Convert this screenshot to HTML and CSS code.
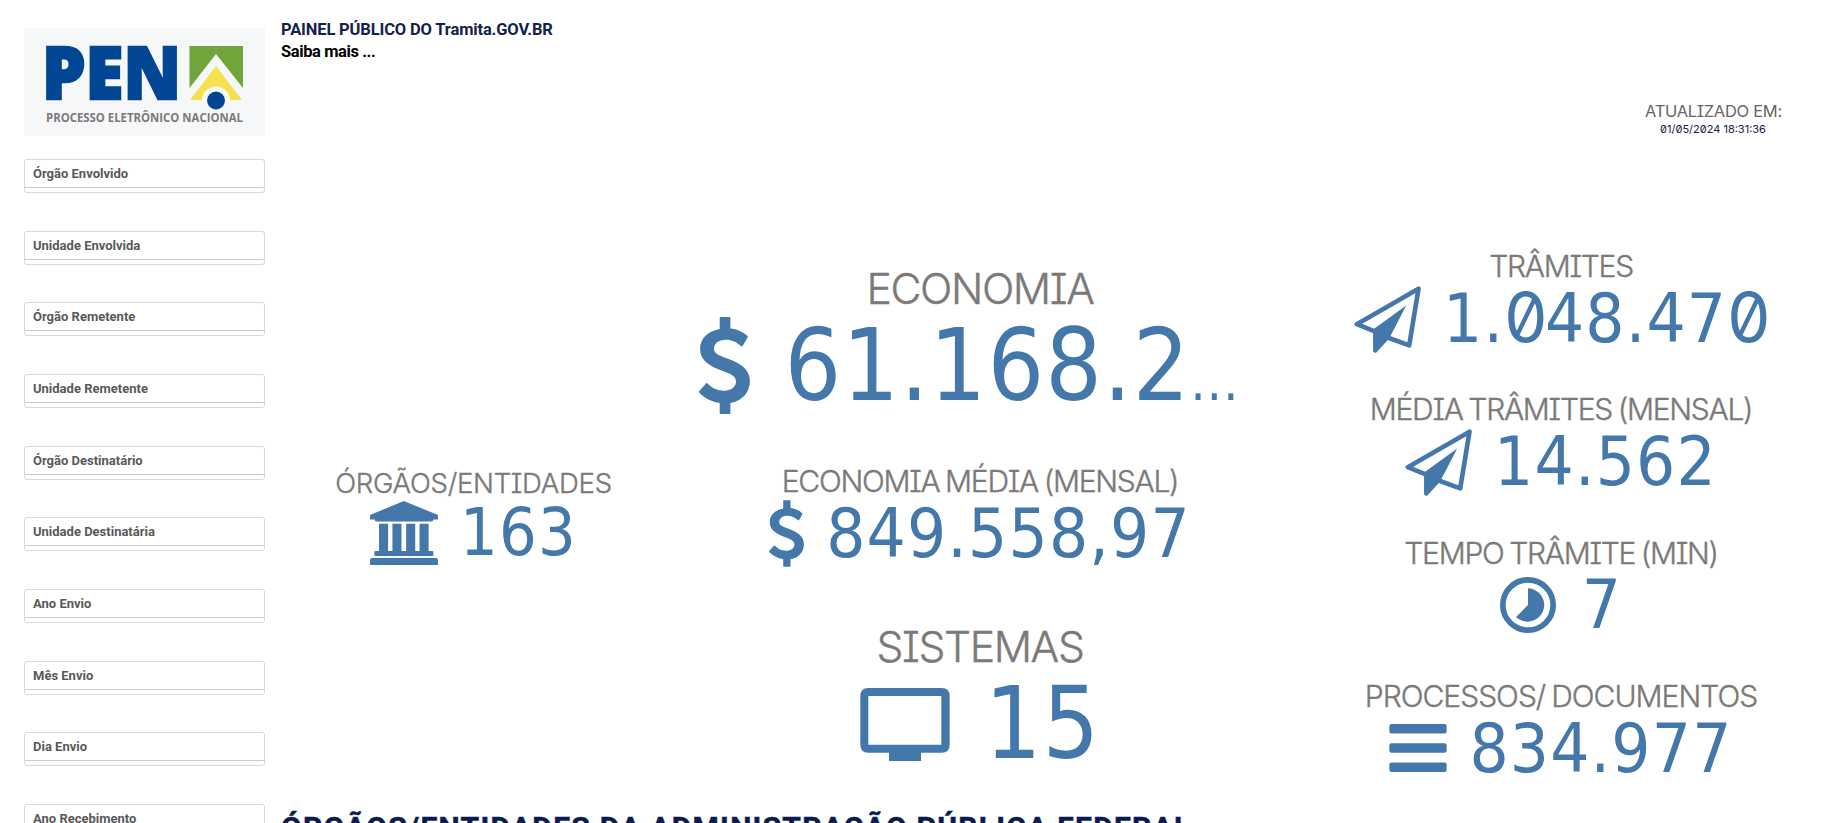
FILE: index.html
```html
<!DOCTYPE html>
<html lang="pt-BR">
<head>
    <meta charset="UTF-8">
    <meta name="viewport" content="width=device-width, initial-scale=1.0">
    <title>Painel Público do Tramita.GOV.BR</title>
    <link rel="stylesheet" href="styles.css">
</head>
<body>
    <svg class="sprite" width="0" height="0">
        <symbol id="dollar" viewBox="0 0 51 97">
            <path d="M20.7 12C8 14.5 1.1 22 1.1 31.7C1.1 42 8 47.5 20 52.5C30 56.5 37 58 37 64.5C37 70 32 73.7 25 73.7C18 73.7 13 71 8.5 66.5Q7.5 65.5 6.5 67L.3 74Q-.3 75 .6 76C6 81.5 13 85 20.7 86V96Q20.7 97 21.7 97H30.4Q31.4 97 31.4 96V86C43.5 84 50.9 75 50.9 64C50.9 52 41 46.5 31 42.5C22 39 15 37.5 15 32C15 26.5 19.5 22.7 26.8 22.7C33 22.7 37.5 25 42 29Q43 30 43.8 28.8L48.6 20.5Q49.2 19.5 48 18.5C44 15 38 12 31.4 11.5V1Q31.4 0 30.4 0H21.7Q20.7 0 20.7 1Z"/>
        </symbol>
        <symbol id="plane" viewBox="0 0 201 202">
            <path d="M60 136L8 115L194 8L166 179L103 156" fill="none" stroke="currentColor" stroke-width="14" stroke-linejoin="round"/>
            <path d="M157 59L57 131V196Q58 203 66 201L105 159Z"/>
        </symbol>
        <symbol id="bank" viewBox="0 0 203 191">
            <path d="M101 0L203 42V55H189Q189 61 183 61H20Q14 61 14 55H0V42Z"/>
            <path d="M27 68H54V152H27ZM67 68H94V152H67ZM108 68H135V152H108ZM148 68H175V152H148Z"/>
            <rect x="13" y="149" width="176" height="15" rx="3"/>
            <path d="M6 170H197Q203 170 203 176V191H0V176Q0 170 6 170Z"/>
        </symbol>
        <symbol id="monitor" viewBox="0 0 268 219">
            <path fill-rule="evenodd" d="M24 0H244Q268 0 268 24V170Q268 194 244 194H182V219H86V194H24Q0 194 0 170V24Q0 0 24 0ZM24 24V170H243V24Z"/>
        </symbol>
        <symbol id="clock" viewBox="0 0 168 168">
            <circle cx="84" cy="84" r="75.5" fill="none" stroke="currentColor" stroke-width="17"/>
            <path d="M84 34A50 50 0 1 1 48 120L84 84Z"/>
        </symbol>
        <symbol id="bars" viewBox="0 0 173 145">
            <rect width="173" height="29" rx="6"/>
            <rect y="58" width="173" height="29" rx="6"/>
            <rect y="116" width="173" height="29" rx="6"/>
        </symbol>
    </svg>

    <aside class="sidebar">
        <svg class="logo" viewBox="0 0 241 108">
            <text class="logo-name" x="18" y="71" textLength="139" lengthAdjust="spacingAndGlyphs">PEN</text>
            <path fill="#70a53b" d="M165.500 18H219V60L192 26L165.500 60Z"/>
            <path fill="#f4e14d" d="M192 38L218 72H166Z"/>
            <circle cx="192" cy="72.500" r="14" fill="#f6f7f9"/>
            <circle cx="192" cy="72.500" r="9" fill="#004695"/>
            <text class="logo-caption" x="22" y="94" textLength="197" lengthAdjust="spacingAndGlyphs">PROCESSO ELETRÔNICO NACIONAL</text>
        </svg>
        <div class="filters">
            <div class="filter">Órgão Envolvido</div>
            <div class="filter">Unidade Envolvida</div>
            <div class="filter">Órgão Remetente</div>
            <div class="filter">Unidade Remetente</div>
            <div class="filter">Órgão Destinatário</div>
            <div class="filter">Unidade Destinatária</div>
            <div class="filter">Ano Envio</div>
            <div class="filter">Mês Envio</div>
            <div class="filter">Dia Envio</div>
            <div class="filter">Ano Recebimento</div>
        </div>
    </aside>

    <main class="content">
        <header class="header">
            <h1>PAINEL PÚBLICO DO Tramita.GOV.BR</h1>
            <a class="more">Saiba mais ...</a>
        </header>

        <div class="updated">
            <div class="updated-label">ATUALIZADO EM:</div>
            <div class="updated-date">01/05/2024 18:31:36</div>
        </div>

        <section class="indicators">
            <div class="column orgs">
                <div class="kpi small">
                    <div class="label">ÓRGÃOS/ENTIDADES</div>
                    <div class="value"><svg class="icon bank"><use href="#bank"/></svg><span class="number">163</span></div>
                </div>
            </div>

            <div class="column economy">
                <div class="kpi big">
                    <div class="label">ECONOMIA</div>
                    <div class="value"><svg class="icon dollar-big"><use href="#dollar"/></svg><span class="number">61.168.2<small>...</small></span></div>
                </div>
                <div class="kpi">
                    <div class="label">ECONOMIA MÉDIA (MENSAL)</div>
                    <div class="value"><svg class="icon dollar"><use href="#dollar"/></svg><span class="number">849.558,97</span></div>
                </div>
                <div class="kpi big systems">
                    <div class="label">SISTEMAS</div>
                    <div class="value"><svg class="icon monitor"><use href="#monitor"/></svg><span class="number">15</span></div>
                </div>
            </div>

            <div class="column transfers">
                <div class="kpi">
                    <div class="label">TRÂMITES</div>
                    <div class="value"><svg class="icon plane"><use href="#plane"/></svg><span class="number">1.<span class="zero">0</span>48.47<span class="zero">0</span></span></div>
                </div>
                <div class="kpi">
                    <div class="label">MÉDIA TRÂMITES (MENSAL)</div>
                    <div class="value"><svg class="icon plane"><use href="#plane"/></svg><span class="number">14.562</span></div>
                </div>
                <div class="kpi">
                    <div class="label">TEMPO TRÂMITE (MIN)</div>
                    <div class="value"><svg class="icon clock"><use href="#clock"/></svg><span class="number">7</span></div>
                </div>
                <div class="kpi">
                    <div class="label wide">PROCESSOS/ DOCUMENTOS</div>
                    <div class="value"><svg class="icon bars"><use href="#bars"/></svg><span class="number">834.977</span></div>
                </div>
            </div>
        </section>

        <h2 class="section-title">ÓRGÃOS/ENTIDADES DA ADMINISTRAÇÃO PÚBLICA FEDERAL</h2>
    </main>
</body>
</html>
```
FILE: styles.css
```css
* {
    margin: 0;
    padding: 0;
    box-sizing: border-box;
}

body {
    height: 823px;
    overflow: hidden;
    display: flex;
    background: #fff;
    font-family: Roboto, sans-serif;
}

.sprite {
    position: absolute;
}

/* Sidebar */
.sidebar {
    width: 281px;
    padding: 28px 16px 0 24px;
    flex-shrink: 0;
}

.logo {
    display: block;
    width: 241px;
    height: 108px;
    background: #f6f7f9;
}

.logo-name {
    font-family: "Open Sans", sans-serif;
    font-weight: 800;
    font-size: 73px;
    fill: #004695;
    stroke: #004695;
    stroke-width: 2.5px;
}

.logo-caption {
    font-family: "Open Sans", sans-serif;
    font-weight: 700;
    font-size: 12px;
    fill: #7b7a78;
}

.filters {
    margin-top: 23px;
    display: flex;
    flex-direction: column;
    gap: 37.67px;
}

.filter {
    height: 34px;
    flex-shrink: 0;
    padding-left: 8px;
    border: 1px solid #d9d9d9;
    border-radius: 3px;
    background: linear-gradient(#ccc, #ccc) 0 27px / 100% 1px no-repeat;
    font-size: 13px;
    font-weight: 700;
    line-height: 28px;
    color: #595959;
}

/* Header */
.content {
    flex: 1;
    display: flex;
    flex-direction: column;
}

.content > * {
    flex-shrink: 0;
}

.header {
    padding-top: 19px;
    height: 96px;
    font-size: 16.5px;
    font-weight: 700;
    line-height: 22px;
}

.header h1 {
    font-size: inherit;
    color: #14214d;
    letter-spacing: -0.15px;
}

.more {
    color: #000;
    letter-spacing: -0.4px;
}

.updated {
    width: 136px;
    height: 155px;
    margin-left: auto;
    margin-right: 52px;
    font-family: Inter, sans-serif;
    text-align: center;
    white-space: nowrap;
}

.updated-label {
    font-size: 16.5px;
    line-height: 30px;
    letter-spacing: -0.3px;
    color: #666;
    font-feature-settings: "cv08";
}

.updated-date {
    font-size: 11px;
    line-height: 7px;
    color: #14214d;
    font-feature-settings: "zero";
}

/* Indicators */
.indicators {
    height: 549px;
    display: grid;
    grid-template-columns: 385px 628px 534px;
}

.column {
    display: flex;
    flex-direction: column;
}

.orgs {
    padding-top: 218px;
}

.economy {
    padding-top: 14.5px;
    gap: 52.5px;
}

.systems {
    margin-top: 4px;
}

.transfers {
    gap: 42.4px;
}

.label {
    font-family: Inter, sans-serif;
    font-size: 30px;
    font-weight: 300;
    line-height: 30px;
    letter-spacing: -0.042em;
    word-spacing: -0.05em;
    text-align: center;
    white-space: nowrap;
    color: #7b7a78;
    -webkit-text-stroke: 0.4px #7b7a78;
    font-feature-settings: "cv08";
}

.label.wide {
    letter-spacing: -0.033em;
}

.value {
    height: 71px;
    display: flex;
    justify-content: center;
    align-items: center;
    gap: 22px;
    font-family: "DejaVu Sans Condensed", "DejaVu Sans", sans-serif;
    font-stretch: condensed;
    font-size: 68.5px;
    line-height: 71px;
    letter-spacing: 1.2px;
    white-space: nowrap;
    color: #4477aa;
}

.number {
    margin-top: 3px;
}

.zero {
    font-family: Inter, sans-serif;
    font-weight: 400;
    letter-spacing: -2.5px;
    font-feature-settings: "zero";
}

.small .label {
    font-size: 27.5px;
    line-height: 28px;
    letter-spacing: -0.01em;
}

.small .value {
    height: 68px;
    font-size: 66px;
    line-height: 68px;
}

.big .label {
    font-size: 42.6px;
    line-height: 46px;
    letter-spacing: -0.033em;
}

.big .value {
    height: 102px;
    font-size: 99px;
    line-height: 102px;
}

.big .number {
    margin-top: 6px;
}

.value small {
    margin-right: 21px;
    font-size: 53px;
    line-height: 0;
}

.icon {
    fill: currentColor;
    flex-shrink: 0;
}

.bank {
    width: 68px;
    height: 64px;
    margin-top: 4px;
}

.dollar-big {
    width: 51px;
    height: 97px;
    margin-top: 6px;
    margin-right: 12px;
}

.dollar {
    width: 35px;
    height: 67px;
    margin-top: 3px;
}

.monitor {
    width: 90px;
    height: 73px;
    margin-top: 7px;
    margin-right: 13px;
}

.plane {
    width: 67px;
    height: 67px;
    margin-top: 6px;
}

.clock {
    width: 56px;
    height: 56px;
    margin-top: 3px;
    margin-right: 4px;
}

.bars {
    width: 58px;
    height: 48px;
    margin-top: 3px;
}

.section-title {
    font-size: 30px;
    line-height: 36px;
    padding-top: 10px;
    letter-spacing: 1.27px;
    white-space: nowrap;
    color: #0c1b4d;
    -webkit-text-stroke: 0.5px #0c1b4d;
}
```
